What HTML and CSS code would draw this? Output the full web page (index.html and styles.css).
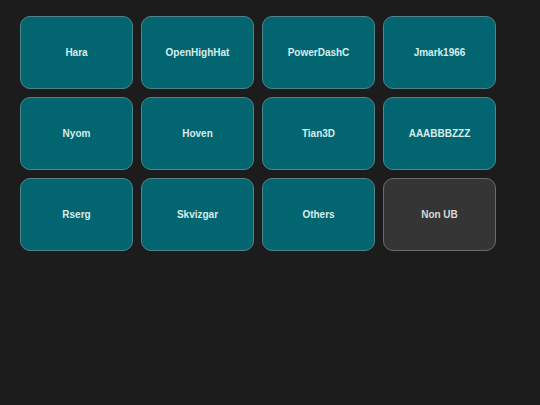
FILE: index.html
```html
<!DOCTYPE html>
<html lang="en">
<head>
    <meta charset="UTF-8">
    <meta name="viewport" content="width=device-width, initial-scale=1.0">
    <title>Groups</title>
    <link rel="stylesheet" href="styles.css">
</head>
<body>
    <div class="grid">
        <button class="tile">Hara</button>
        <button class="tile">OpenHighHat</button>
        <button class="tile">PowerDashC</button>
        <button class="tile">Jmark1966</button>
        <button class="tile">Nyom</button>
        <button class="tile">Hoven</button>
        <button class="tile">Tian3D</button>
        <button class="tile">AAABBBZZZ</button>
        <button class="tile">Rserg</button>
        <button class="tile">Skvizgar</button>
        <button class="tile">Others</button>
        <button class="tile other">Non UB</button>
    </div>
</body>
</html>
```

FILE: styles.css
```css
* {
    margin: 0;
    padding: 0;
    box-sizing: border-box;
}

html, body {
    background: #1c1c1c;
}

body {
    min-height: 100vh;
    padding: 16px 20px;
    font-family: 'Liberation Sans', Arial, sans-serif;
}

.grid {
    display: grid;
    grid-template-columns: repeat(4, 113px);
    grid-auto-rows: 73px;
    gap: 8px 8px;
}

.tile {
    background: #03656f;
    border: 1px solid #4f858a;
    border-radius: 10px;
    color: #d6ecec;
    font-family: inherit;
    font-size: 10px;
    font-weight: bold;
    cursor: pointer;
}

.tile.other {
    background: #353535;
    border-color: #6a6a6a;
    color: #d8d8d8;
}
```
